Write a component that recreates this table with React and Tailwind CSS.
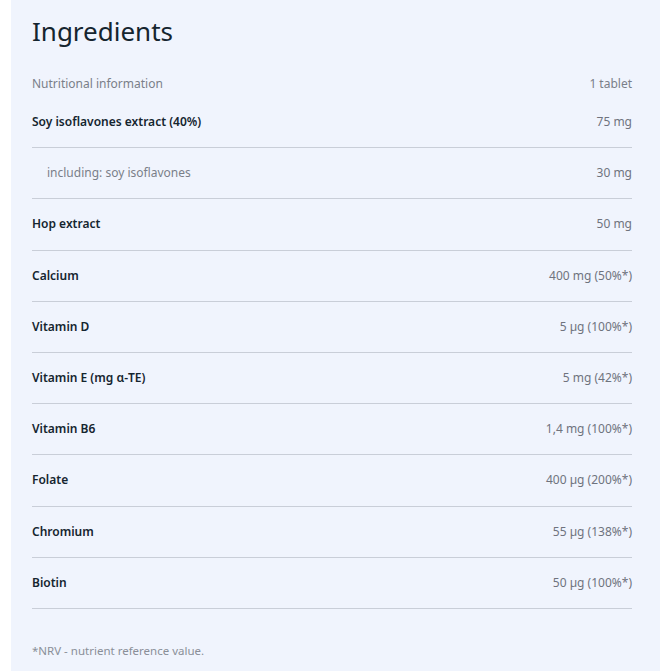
const rows = [
  { name: 'Soy isoflavones extract (40%)', value: '75 mg' },
  { name: 'including: soy isoflavones', value: '30 mg', sub: true },
  { name: 'Hop extract', value: '50 mg' },
  { name: 'Calcium', value: '400 mg (50%*)' },
  { name: 'Vitamin D', value: '5 µg (100%*)' },
  { name: 'Vitamin E (mg α-TE)', value: '5 mg (42%*)' },
  { name: 'Vitamin B6', value: '1,4 mg (100%*)' },
  { name: 'Folate', value: '400 µg (200%*)' },
  { name: 'Chromium', value: '55 µg (138%*)' },
  { name: 'Biotin', value: '50 µg (100%*)' },
];

export default function App() {
  return (
    <div className="min-h-[671px] bg-white px-[11px] font-['Noto_Sans',sans-serif]">
      <div className="min-h-[671px] w-[649px] bg-[#f0f4fd] pl-[21px] pr-[28px]">
        <h2 className="pt-[14px] text-[26px] leading-[34px] text-[#15252f]">Ingredients</h2>

        <div className="mt-[23px] flex h-[26px] items-center justify-between text-[12px] text-[#7a7f89]">
          <span>Nutritional information</span>
          <span>1 tablet</span>
        </div>

        <div>
          {rows.map((r) => (
            <div
              key={r.name}
              className="flex h-[51.2px] items-center justify-between border-b border-[#c9ced8] text-[12px]"
            >
              {r.sub ? (
                <span className="pl-[15px] text-[#7a7f89]">{r.name}</span>
              ) : (
                <span className="font-semibold text-[#15252f]">{r.name}</span>
              )}
              <span className="text-[#6f737d]">{r.value}</span>
            </div>
          ))}
        </div>

        <p className="pt-[33px] text-[11.5px] text-[#8a8f98]">*NRV - nutrient reference value.</p>
      </div>
    </div>
  );
}
